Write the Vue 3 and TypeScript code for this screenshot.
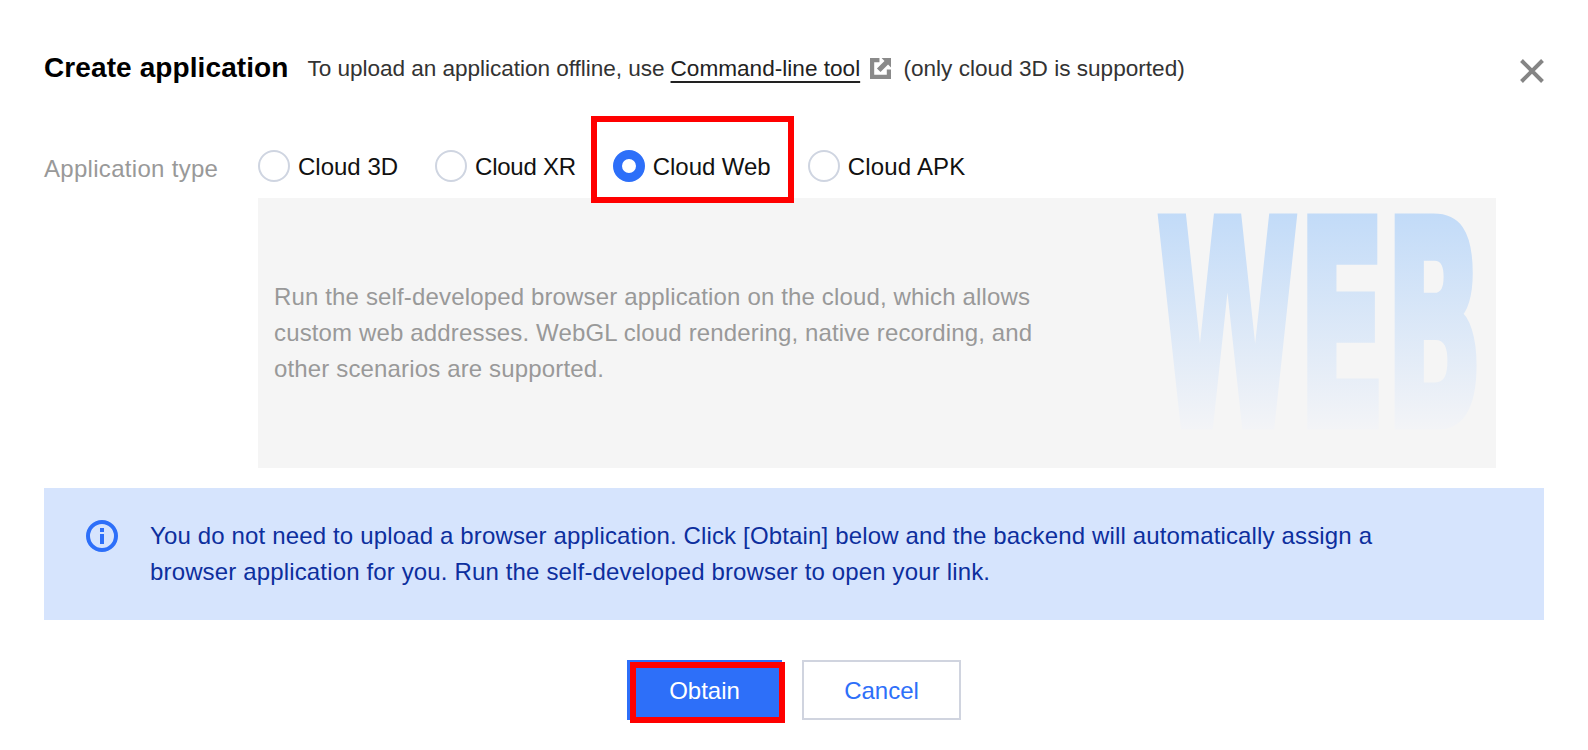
<script setup lang="ts">
interface RadioOption {
  label: string
  checked: boolean
  marked: boolean
}

const options: RadioOption[] = [
  { label: 'Cloud 3D', checked: false, marked: false },
  { label: 'Cloud XR', checked: false, marked: false },
  { label: 'Cloud Web', checked: true, marked: true },
  { label: 'Cloud APK', checked: false, marked: false },
]
</script>

<template>
  <div class="dialog">
    <header class="header">
      <h1 class="title">Create application</h1>
      <p class="subtitle">
        <span class="lead">To upload an application offline, use</span>
        <a class="link">Command-line tool</a>
        <svg class="ext" viewBox="0 0 20 20" width="21" height="21" aria-hidden="true">
          <path fill="#8a8a8a" d="M0 0H9V4H4V16H16V11H20V20H0Z" />
          <path fill="#8a8a8a" d="M11 0H20V9L17.2 6.2L10 13.4L6.6 10L13.8 2.8Z" />
        </svg>
        (only cloud 3D is supported)
      </p>
      <svg class="close" viewBox="0 0 24 24" width="24" height="24" aria-label="Close">
        <path d="M1.5 1.5L22.5 22.5M22.5 1.5L1.5 22.5" stroke="#858585" stroke-width="4" fill="none" />
      </svg>
    </header>

    <section class="form-row">
      <span class="form-label">Application type</span>
      <div class="form-body">
        <div class="radios">
          <label v-for="o in options" :key="o.label" class="radio">
            <span class="dot" :class="{ checked: o.checked }"></span>
            <span class="radio-text">{{ o.label }}</span>
            <span v-if="o.marked" class="mark-radio"></span>
          </label>
        </div>
        <div class="panel">
          <p class="panel-text">
            Run the self-developed browser application on the cloud, which allows custom web addresses. WebGL cloud rendering, native recording, and other scenarios are supported.
          </p>
          <svg class="watermark" viewBox="0 0 320 217" width="320" height="217" aria-hidden="true">
            <defs>
              <linearGradient id="web-fade" gradientUnits="userSpaceOnUse" x1="0" y1="-75" x2="0" y2="2">
                <stop offset="0" stop-color="#c2dbf8" />
                <stop offset="1" stop-color="#f3f4f7" />
              </linearGradient>
            </defs>
            <text
              transform="translate(0 211) scale(1 2.81)"
              x="0"
              y="0"
              textLength="326"
              lengthAdjust="spacingAndGlyphs"
              class="watermark-text"
              fill="url(#web-fade)"
              stroke="url(#web-fade)"
            >WEB</text>
          </svg>
        </div>
      </div>
    </section>

    <section class="alert">
      <svg class="info" viewBox="0 0 32 32" width="32" height="32" aria-hidden="true">
        <circle cx="16" cy="16" r="14" fill="none" stroke="#2d6ff9" stroke-width="4" />
        <rect x="14" y="8" width="4" height="4" fill="#2d6ff9" />
        <rect x="14" y="14" width="4" height="10" fill="#2d6ff9" />
      </svg>
      <p class="alert-text">
        You do not need to upload a browser application. Click [Obtain] below and the backend will automatically assign a browser application for you. Run the self-developed browser to open your link.
      </p>
    </section>

    <footer class="footer">
      <button class="btn primary" type="button">
        Obtain
        <span class="mark-btn"></span>
      </button>
      <button class="btn ghost" type="button">Cancel</button>
    </footer>
  </div>
</template>

<style>
html, body {
  margin: 0;
  background: #ffffff;
}
</style>

<style scoped>
.dialog {
  width: 1588px;
  height: 750px;
  box-sizing: border-box;
  padding: 48px 44px 0;
  font-family: "Liberation Sans", Arial, sans-serif;
  font-size: 24px;
  color: #111111;
  overflow: hidden;
}
.header {
  display: flex;
  align-items: center;
  height: 40px;
}
.title {
  margin: 0 19px 0 0;
  font-size: 28px;
  line-height: 40px;
  font-weight: 700;
  letter-spacing: 0.1px;
  color: #000000;
}
.subtitle {
  margin: 0;
  padding-top: 1px;
  flex: 1;
  font-size: 22.6px;
  line-height: 40px;
  color: #333333;
  white-space: nowrap;
}
.lead {
  letter-spacing: -0.05px;
}
.link {
  margin-left: 6px;
  color: #222222;
  text-decoration: underline;
  text-underline-offset: 5px;
}
.ext {
  vertical-align: -3px;
  margin: 0 6px 0 10px;
}
.close {
  flex: none;
  margin-top: 5px;
}
.form-row {
  display: flex;
  margin-top: 62px;
}
.form-label {
  width: 214px;
  flex: none;
  padding-top: 3px;
  line-height: 32px;
  letter-spacing: 0.3px;
  color: #999999;
}
.form-body {
  flex: 1;
}
.radios {
  display: flex;
  gap: 37px;
  height: 32px;
}
.radio {
  position: relative;
  display: flex;
  align-items: center;
  gap: 8px;
}
.dot {
  width: 32px;
  height: 32px;
  box-sizing: border-box;
  border: 2px solid #cfd5e1;
  border-radius: 50%;
  background: #ffffff;
}
.dot.checked {
  border: 9px solid #2d6ff9;
}
.radio-text {
  padding-top: 2px;
  line-height: 32px;
  color: #111111;
}
.radio:nth-child(2) .radio-text {
  letter-spacing: -0.25px;
}
.radio:nth-child(3) .radio-text {
  letter-spacing: -0.05px;
}
.radio:nth-child(4) .radio-text {
  letter-spacing: 0.2px;
}
.mark-radio {
  position: absolute;
  z-index: 2;
  left: -22px;
  top: -34px;
  width: 203px;
  height: 87px;
  box-sizing: border-box;
  border: 6px solid #ff0000;
}
.panel {
  position: relative;
  margin-top: 16px;
  width: 1238px;
  height: 270px;
  box-sizing: border-box;
  padding: 0 16px;
  display: flex;
  align-items: center;
  background: #f5f5f5;
}
.panel-text {
  margin: 0;
  max-width: 780px;
  line-height: 36px;
  letter-spacing: 0.15px;
  color: #999999;
}
.watermark {
  position: absolute;
  left: 899px;
  top: 15px;
  overflow: visible;
}
.watermark-text {
  font-family: "DejaVu Sans", sans-serif;
  font-size: 100px;
  font-weight: 700;
  stroke-width: 4;
  stroke-linejoin: miter;
}
.alert {
  display: flex;
  gap: 32px;
  margin-top: 20px;
  height: 132px;
  box-sizing: border-box;
  padding: 30px 42px;
  background: #d6e4fd;
}
.info {
  flex: none;
  margin-top: 2px;
}
.alert-text {
  margin: 0;
  max-width: 1240px;
  line-height: 36px;
  letter-spacing: 0.15px;
  color: #0d2f9e;
}
.footer {
  display: flex;
  justify-content: center;
  gap: 20px;
  margin-top: 40px;
}
.btn {
  position: relative;
  height: 60px;
  padding: 2px 0 0;
  font-family: inherit;
  font-size: 24px;
  box-sizing: border-box;
  border-radius: 0;
}
.primary {
  width: 155px;
  border: none;
  background: #2d6ff9;
  color: #ffffff;
}
.ghost {
  width: 159px;
  border: 2px solid #d0d4df;
  background: #ffffff;
  color: #2d6ff9;
}
.mark-btn {
  position: absolute;
  left: 3px;
  top: 2px;
  width: 155px;
  height: 61px;
  box-sizing: border-box;
  border: 6px solid #ff0000;
}
</style>
